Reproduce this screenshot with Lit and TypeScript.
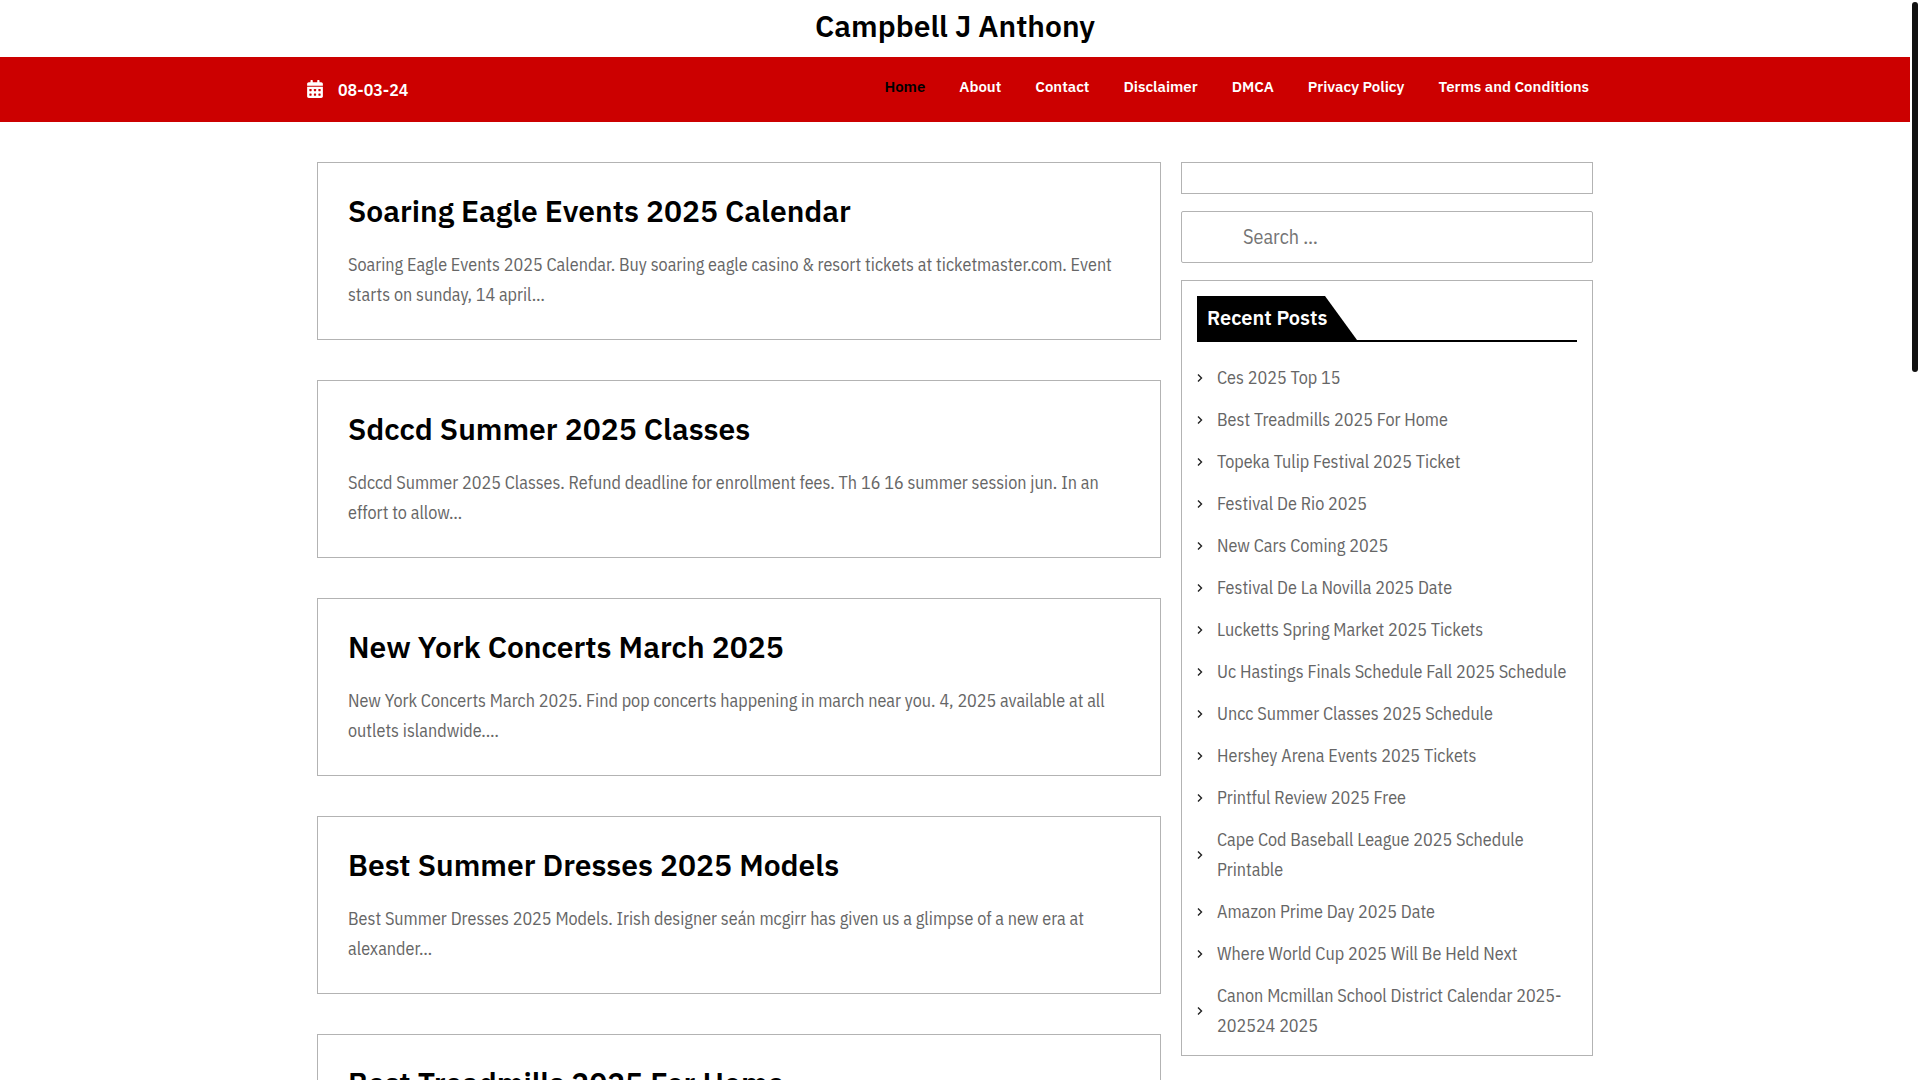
import { LitElement, html, css, svg } from "lit";
import { customElement } from "lit/decorators.js";

interface Post {
  title: string;
  excerpt: string;
}

const NAV = ["Home", "About", "Contact", "Disclaimer", "DMCA", "Privacy Policy", "Terms and Conditions"];

const POSTS: Post[] = [
  {
    title: "Soaring Eagle Events 2025 Calendar",
    excerpt:
      "Soaring Eagle Events 2025 Calendar. Buy soaring eagle casino & resort tickets at ticketmaster.com. Event starts on sunday, 14 april…",
  },
  {
    title: "Sdccd Summer 2025 Classes",
    excerpt:
      "Sdccd Summer 2025 Classes. Refund deadline for enrollment fees. Th 16 16 summer session jun. In an effort to allow…",
  },
  {
    title: "New York Concerts March 2025",
    excerpt:
      "New York Concerts March 2025. Find pop concerts happening in march near you. 4, 2025 available at all outlets islandwide.…",
  },
  {
    title: "Best Summer Dresses 2025 Models",
    excerpt:
      "Best Summer Dresses 2025 Models. Irish designer seán mcgirr has given us a glimpse of a new era at alexander…",
  },
  { title: "Best Treadmills 2025 For Home", excerpt: "" },
];

const RECENT = [
  "Ces 2025 Top 15",
  "Best Treadmills 2025 For Home",
  "Topeka Tulip Festival 2025 Ticket",
  "Festival De Rio 2025",
  "New Cars Coming 2025",
  "Festival De La Novilla 2025 Date",
  "Lucketts Spring Market 2025 Tickets",
  "Uc Hastings Finals Schedule Fall 2025 Schedule",
  "Uncc Summer Classes 2025 Schedule",
  "Hershey Arena Events 2025 Tickets",
  "Printful Review 2025 Free",
  "Cape Cod Baseball League 2025 Schedule Printable",
  "Amazon Prime Day 2025 Date",
  "Where World Cup 2025 Will Be Held Next",
  "Canon Mcmillan School District Calendar 2025-202524 2025",
];

const dayCell = (x: number, y: number) =>
  svg`<rect x=${x} y=${y} width="64" height="64" rx="12" fill="#cc0000"></rect>`;

@customElement("app-root")
export class AppRoot extends LitElement {
  static styles = css`
    :host {
      --display: "IBM Plex Sans", Roboto, "Liberation Sans", sans-serif;
      display: block;
      position: relative;
      box-sizing: border-box;
      height: 100vh;
      overflow: hidden;
      padding-right: 10px;
      background: #fff;
      color: #666;
      font-family: "IBM Plex Sans Condensed", "IBM Plex Sans", Roboto, "Liberation Sans", sans-serif;
      font-size: 18px;
      line-height: 30px;
    }
    * {
      box-sizing: border-box;
    }
    a {
      color: inherit;
      text-decoration: none;
    }
    h1,
    h2,
    p,
    ul {
      margin: 0;
      padding: 0;
      font-weight: inherit;
    }
    h1,
    h2 {
      font-family: var(--display);
    }
    .brand {
      padding: 8px 0 13px;
      text-align: center;
      color: #000;
      font-size: 30px;
      line-height: 36px;
      font-weight: 600;
    }
    .brand h1 {
      font-size: inherit;
      font-weight: 600;
    }
    .bar {
      background: #cc0000;
      color: #fff;
    }
    .bar-inner {
      display: flex;
      justify-content: space-between;
      align-items: flex-start;
      max-width: 1300px;
      height: 65px;
      margin: 0 auto;
      padding: 15px 16px 0 0;
    }
    .date {
      display: flex;
      align-items: flex-start;
      gap: 15px;
      padding: 3px 0 0 2px;
      font-family: var(--display);
      font-size: 16px;
      font-weight: 600;
    }
    .date svg {
      width: 16px;
      height: 18px;
      margin-top: 5px;
    }
    .menu {
      display: flex;
      gap: 34px;
      list-style: none;
      font-family: var(--display);
      font-size: 15px;
      font-weight: 600;
    }
    .menu .current {
      color: #000;
    }
    .layout {
      display: grid;
      grid-template-columns: minmax(0, 844fr) minmax(0, 412fr);
      align-items: start;
      gap: 20px;
      max-width: 1276px;
      margin: 0 auto;
      padding-top: 40px;
    }
    .posts {
      display: grid;
      gap: 40px;
    }
    .post {
      min-height: 178px;
      padding: 30px 30px 29px;
      border: 1px solid #b3b3b3;
    }
    .post h2 {
      margin-bottom: 21px;
      color: #000;
      font-size: 30px;
      line-height: 36px;
      font-weight: 600;
    }
    .side {
      display: grid;
      gap: 17px;
    }
    .blank {
      height: 32px;
      border: 1px solid #b3b3b3;
    }
    .search {
      display: block;
      width: 100%;
      height: 52px;
      padding: 0 20px 2px 61px;
      border: 1px solid #b3b3b3;
      border-radius: 2px;
      background: #fff;
      color: #666;
      font: inherit;
      font-size: 20px;
      outline: none;
      appearance: none;
    }
    .search::placeholder {
      color: #757575;
      opacity: 1;
    }
    .recent {
      padding: 15px 15px 8px;
      border: 1px solid #b3b3b3;
    }
    .recent-head {
      display: flex;
      margin-bottom: 15px;
      border-bottom: 2px solid #000;
    }
    .recent-head h2 {
      width: 160px;
      padding-left: 10px;
      background: #000;
      clip-path: polygon(0 0, 128px 0, 160px 100%, 0 100%);
      white-space: nowrap;
      color: #fff;
      font-size: 20px;
      line-height: 44px;
      font-weight: 600;
    }
    .recent-list {
      list-style: none;
    }
    .recent-list li {
      display: flex;
      align-items: center;
      gap: 14px;
      padding: 6px 0;
    }
    .recent-list svg {
      flex: none;
      width: 6px;
      height: 10px;
    }
    .thumb {
      position: absolute;
      top: 2px;
      right: 2px;
      width: 6px;
      height: 370px;
      border-radius: 3px;
      background: #111;
    }
  `;

  render() {
    return html`
      <header>
        <div class="brand">
          <h1><a href="#">Campbell J Anthony</a></h1>
        </div>
        <div class="bar">
          <div class="bar-inner">
            <div class="date">
              <svg viewBox="0 0 448 512" aria-hidden="true">
                <path
                  fill="#fff"
                  d="M0 464c0 26.500 21.500 48 48 48h352c26.500 0 48-21.500 48-48V192H0zM400 64h-48V16c0-8.800-7.200-16-16-16h-32c-8.800 0-16 7.200-16 16v48H160V16c0-8.800-7.200-16-16-16h-32c-8.800 0-16 7.200-16 16v48H48C21.500 64 0 85.500 0 112v48h448v-48c0-26.500-21.500-48-48-48z"
                ></path>
                ${[64, 192, 320].map((x) => [256, 384].map((y) => dayCell(x, y)))}
              </svg>
              <span>08-03-24</span>
            </div>
            <nav>
              <ul class="menu">
                ${NAV.map((label, i) => html`<li><a class=${i === 0 ? "current" : ""} href="#">${label}</a></li>`)}
              </ul>
            </nav>
          </div>
        </div>
      </header>
      <div class="layout">
        <main class="posts">
          ${POSTS.map(
            (post) => html`<article class="post">
              <h2><a href="#">${post.title}</a></h2>
              <p>${post.excerpt}</p>
            </article>`,
          )}
        </main>
        <aside class="side">
          <div class="blank"></div>
          <input class="search" type="search" placeholder="Search …" aria-label="Search" />
          <section class="recent">
            <div class="recent-head"><h2>Recent Posts</h2></div>
            <ul class="recent-list">
              ${RECENT.map(
                (title) => html`<li>
                  <svg viewBox="0 0 6 10" aria-hidden="true">
                    <path d="M1 1.500 4.500 5 1 8.500" fill="none" stroke="#222" stroke-width="1.400"></path>
                  </svg>
                  <a href="#">${title}</a>
                </li>`,
              )}
            </ul>
          </section>
        </aside>
      </div>
      <div class="thumb"></div>
    `;
  }
}
